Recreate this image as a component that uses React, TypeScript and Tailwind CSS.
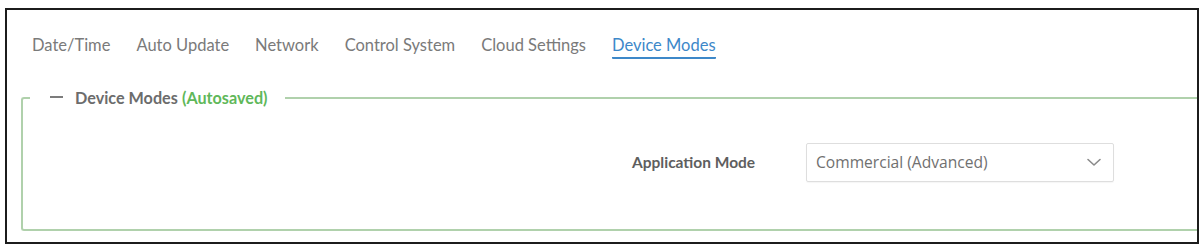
import React from 'react';

// Tabs for the settings panel
const tabs = ['Date/Time', 'Auto Update', 'Network', 'Control System', 'Cloud Settings', 'Device Modes'];

export default function App() {
  const active = 'Device Modes';

  return (
    <div className="w-[1204px] h-[245px] bg-white pt-[8px] pl-[5px] font-[Lato,sans-serif]">
      <div className="w-[1194px] h-[236px] border-2 border-[#1c1c1c] overflow-hidden">
        {/* Tabs */}
        <nav className="flex gap-[26px] pl-[25px]">
          {tabs.map((tab) => (
            <div
              key={tab}
              className={`pt-[25px] pb-[2px] text-[16.5px] leading-[20px] border-b-2 rounded-[1px] ${
                tab === active
                  ? 'text-[#3d88c9] border-[#3d88c9]'
                  : 'text-[#7a7a7a] border-transparent'
              }`}
            >
              {tab}
            </div>
          ))}
        </nav>

        {/* Device Modes group */}
        <fieldset className="ml-[14px] mt-[29px] pl-[7px] border-2 border-r-0 border-[#b0d1ac] rounded-l-[3px]">
          <legend className="pl-[20px] pr-[17px] leading-[20px] text-[16.2px]">
            <span className="inline-block align-middle w-[13px] h-[2px] bg-[#7c7c7c] mr-[12px] -mt-[6px]" />
            <span className="font-bold text-[#6c6c6c]">Device Modes</span>{' '}
            <span className="font-bold text-[#5fb85a]">(Autosaved)</span>
          </legend>

          <div className="flex items-center pt-[35px] pb-[47px] pl-[602px]">
            <label className="w-[174px] text-[15.5px] font-bold text-[#5e5e5e]">Application Mode</label>
            <div className="w-[308px] h-[39px] flex items-center justify-between border border-[#dedede] rounded-[2px] pl-[9px] pr-[11px] shadow-[0_1px_1px_rgba(0,0,0,0.04)]">
              <span className="font-['Open_Sans',sans-serif] text-[15.6px] text-[#707070]">Commercial (Advanced)</span>
              <svg width="16" height="9" viewBox="0 0 16 9" fill="none">
                <path d="M2 1.5 L8 7 L14 1.5" stroke="#8a8a8a" strokeWidth="1.6" strokeLinecap="round" strokeLinejoin="round" />
              </svg>
            </div>
          </div>
        </fieldset>
      </div>
    </div>
  );
}
